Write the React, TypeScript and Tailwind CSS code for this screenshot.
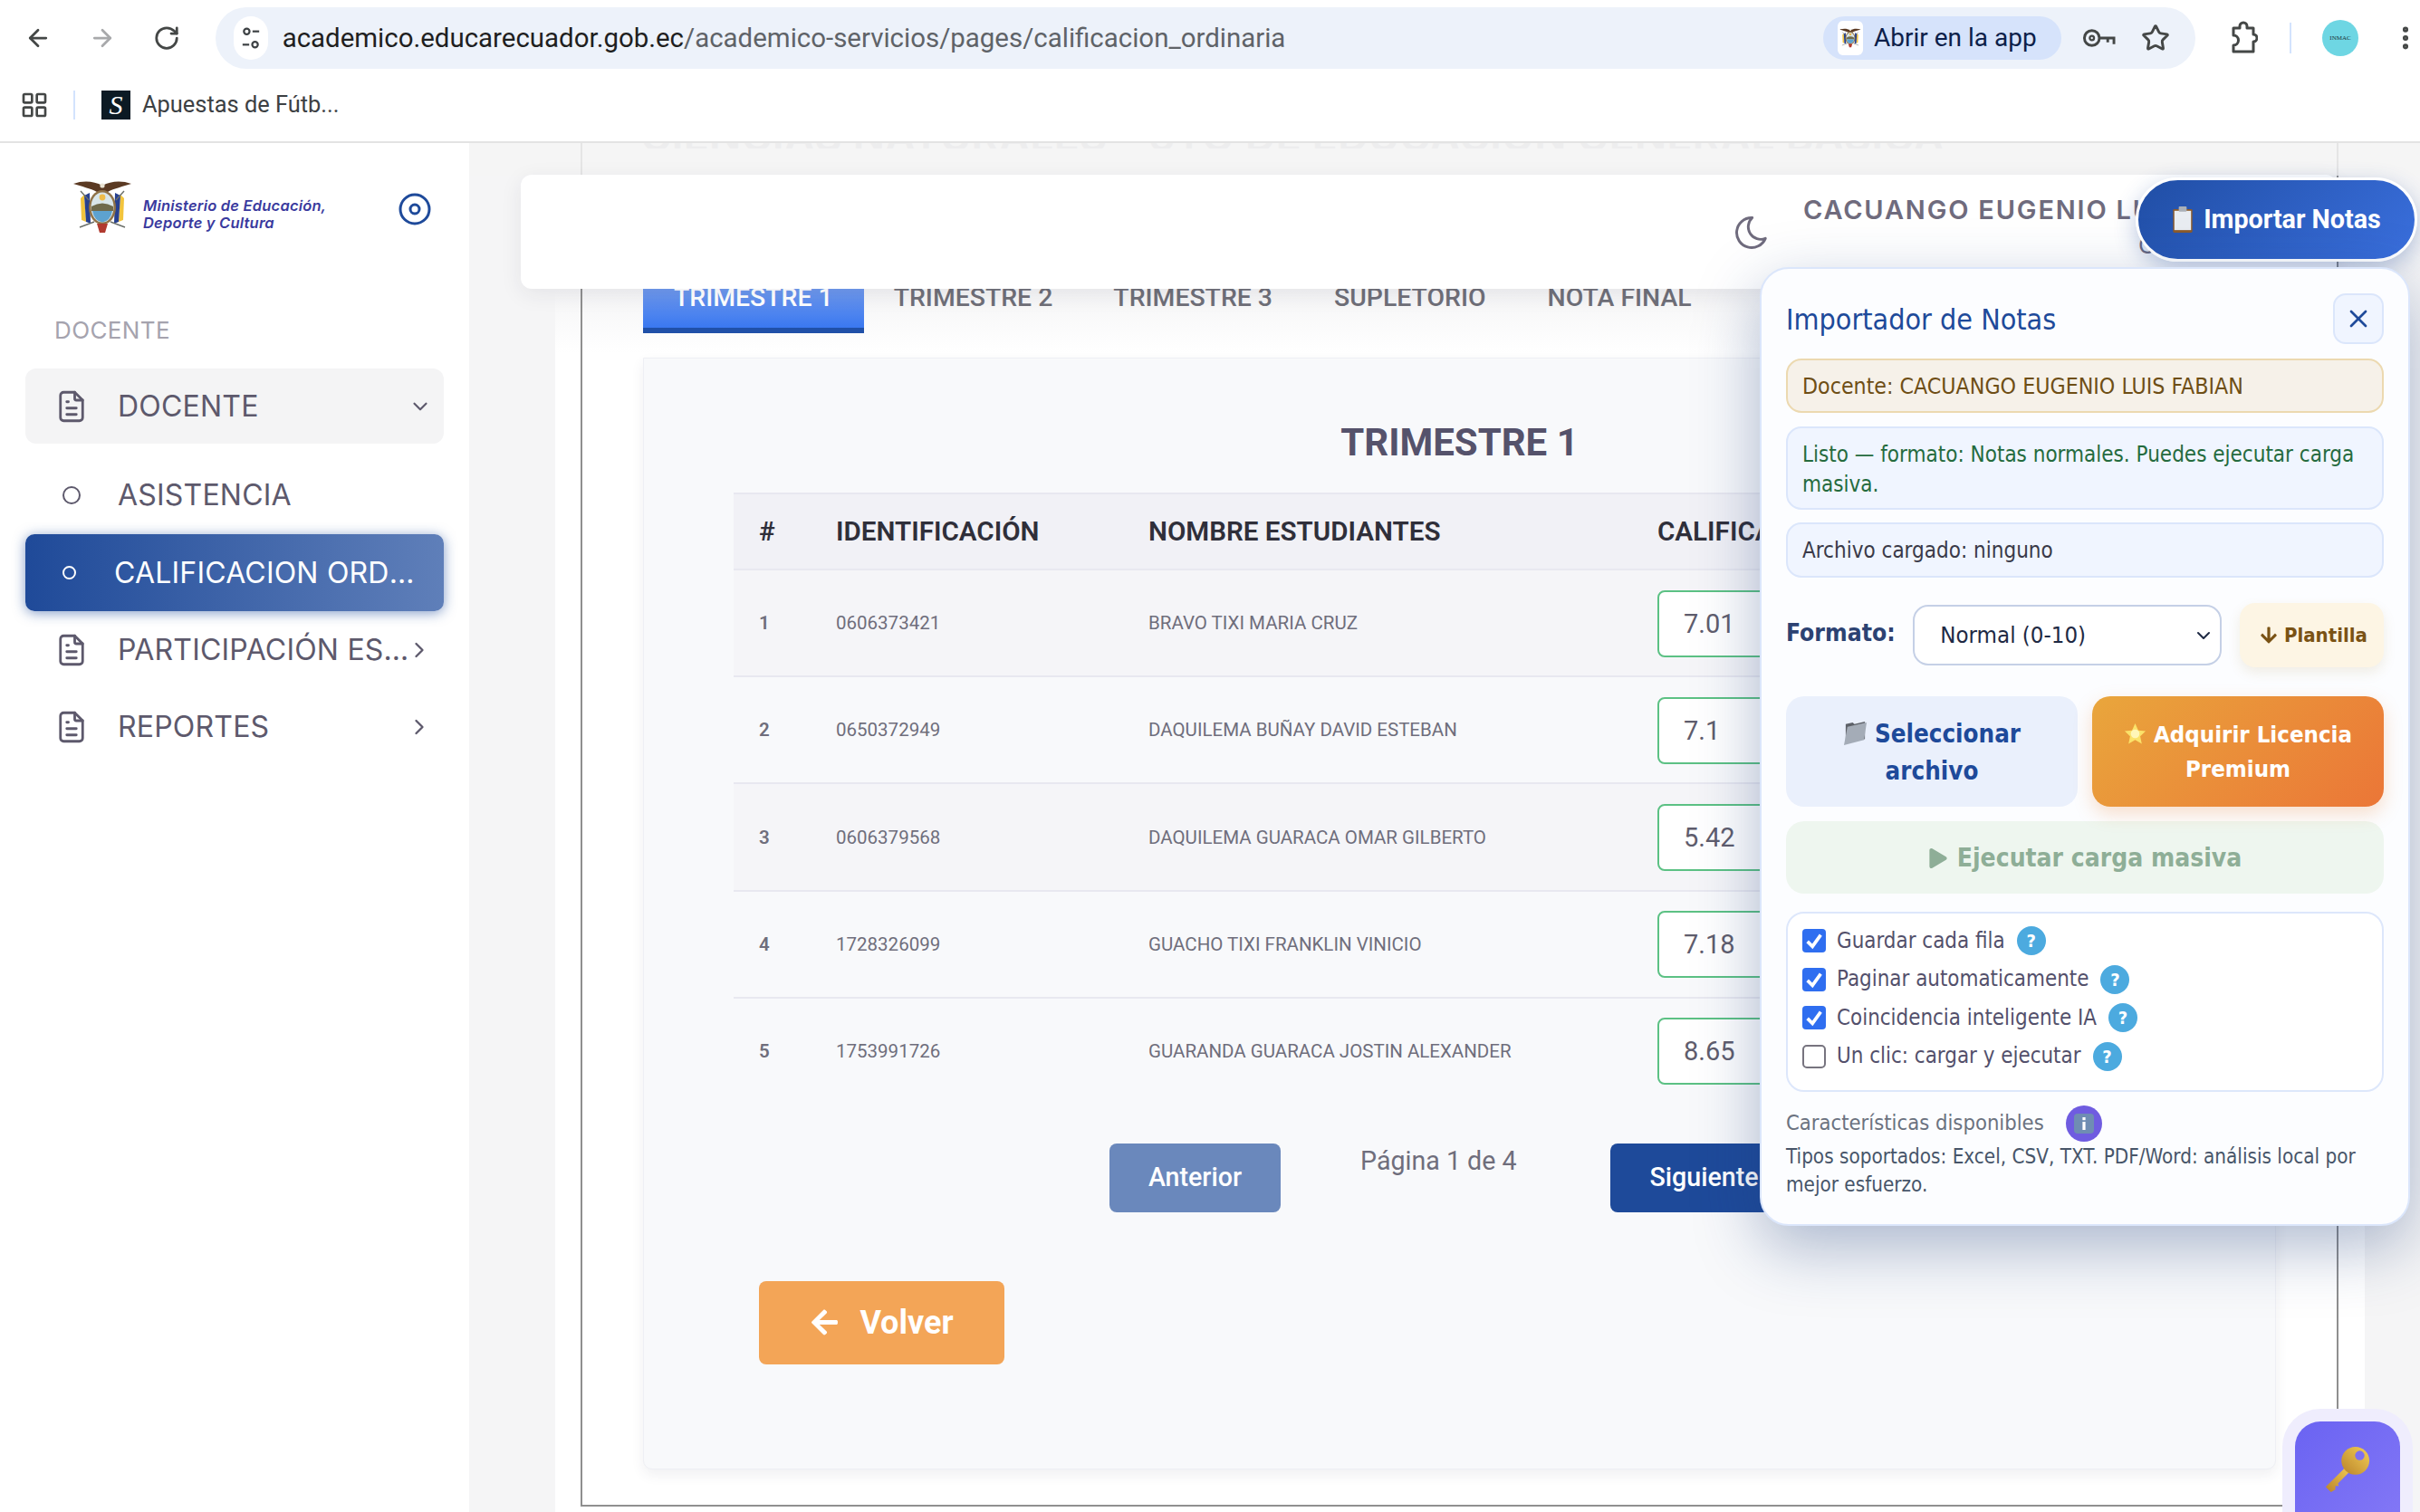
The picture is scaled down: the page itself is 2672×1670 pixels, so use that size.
import React from "react";
import { ArrowLeft, ArrowRight, RotateCw, Star, EllipsisVertical, LayoutGrid } from "lucide-react";
import { TbFileText, TbChevronDown, TbChevronRight, TbMoon, TbX } from "react-icons/tb";
import { FaArrowLeft, FaArrowDown, FaPlay } from "react-icons/fa";

function Emblem({ className }: { className?: string }) {
  return (
    <svg viewBox="0 0 66 64" className={className}>
      <path d="M1 6 C12 2 24 3 33 8 C42 3 54 2 65 6 C56 9 46 11 39 15 L27 15 C20 11 10 9 1 6Z" fill="#5b3a23" />
      <circle cx="33" cy="8" r="2.6" fill="#e9e2d2" />
      <path d="M9 22 L13 18 L15 48 L10 46Z" fill="#f2c43d" />
      <path d="M13 19 L19 16 L20 50 L15 48Z" fill="#27408f" />
      <path d="M57 22 L53 18 L51 48 L56 46Z" fill="#f2c43d" />
      <path d="M53 19 L47 16 L46 50 L51 48Z" fill="#27408f" />
      <ellipse cx="33" cy="32" rx="15" ry="19" fill="#8f7247" />
      <ellipse cx="33" cy="32" rx="12.5" ry="16.5" fill="#d9e6ea" />
      <path d="M21 31 Q33 24 45 31 L45 36 L21 36Z" fill="#6f6a4c" />
      <path d="M22 36 L44 36 Q42 47 33 48.5 Q24 47 22 36Z" fill="#5da2cf" />
      <circle cx="33" cy="21" r="3.4" fill="#eebc4a" />
      <path d="M27 50 L39 50 L36 60 L30 60Z" fill="#b13a2f" />
      <path d="M8 54 L24 48 M58 54 L42 48 M9 14 L18 24 M57 14 L48 24" stroke="#6b6f6a" strokeWidth="1.4" />
    </svg>
  );
}

function Target() {
  return (
    <svg viewBox="0 0 36 36" className="w-[36px] h-[36px] text-[#1e4a9a]" fill="none" stroke="currentColor">
      <circle cx="18" cy="18" r="16" strokeWidth="3" />
      <circle cx="18" cy="18" r="5" strokeWidth="3" />
    </svg>
  );
}

function Tune() {
  return (
    <svg viewBox="0 0 24 32" className="w-[22px] h-[30px] text-[#3c4043]" fill="none" stroke="currentColor" strokeWidth="2.4">
      <circle cx="7" cy="8" r="3.4" />
      <path d="M14 8 H22" />
      <circle cx="17" cy="24" r="3.4" />
      <path d="M2 24 H10" />
    </svg>
  );
}

function ChromeKey() {
  return (
    <svg viewBox="0 0 38 24" className="w-[37px] h-[24px] text-[#444746]" fill="none" stroke="currentColor" strokeWidth="3">
      <circle cx="11" cy="12" r="8.5" />
      <circle cx="11" cy="12" r="2.4" strokeWidth="2.4" />
      <path d="M20 12 H36 V19 M29 12 V17" />
    </svg>
  );
}

function Extension() {
  return (
    <svg viewBox="0 0 30 38" className="ml-[39px] h-[38px] w-[30px]" fill="none" stroke="currentColor" strokeWidth="3" strokeLinejoin="round">
      <path d="M3 8 H10 V6 a4 4 0 0 1 8 0 V8 H25 V15 a4 4 0 0 1 0 8 V34 H3 V27 a5 5 0 0 0 0-11 Z" />
    </svg>
  );
}

function Clipboard() {
  return (
    <svg viewBox="0 0 24 32" className="w-[24px] h-[31px]">
      <rect x="1" y="4" width="22" height="27" rx="1.5" fill="#8b5a2b" />
      <rect x="2.5" y="6" width="19" height="22" fill="#e9edf2" />
      <rect x="7.5" y="1" width="9" height="6" rx="1" fill="#aab0b8" />
    </svg>
  );
}

function Folder() {
  return (
    <svg viewBox="0 0 28 30" className="w-[27px] h-[29px]">
      <path d="M3 5 L11 3 L13 5 L25 2 L25 22 L3 27Z" fill="#5d6168" />
      <path d="M5 8 L27 3 L24 23 L1 29Z" fill="#a4acb7" />
    </svg>
  );
}

function Sparkle() {
  return (
    <svg viewBox="0 0 26 26" className="w-[25px] h-[25px]">
      <path d="M13 1 L16.6 9 L25 10 L18.8 15.8 L20.6 24.5 L13 20 L5.4 24.5 L7.2 15.8 L1 10 L9.4 9Z" fill="#fbe26a" />
      <circle cx="13" cy="13" r="5" fill="#fff6b8" />
    </svg>
  );
}

function InfoEmoji() {
  return (
    <svg viewBox="0 0 24 24" className="w-[24px] h-[24px]">
      <rect x="1" y="1" width="22" height="22" rx="4" fill="#6f8db3" />
      <rect x="10.4" y="10" width="3.2" height="9" fill="#fff" />
      <rect x="10.4" y="5" width="3.2" height="3.2" fill="#fff" />
    </svg>
  );
}

function GoldKey() {
  return (
    <svg viewBox="0 0 56 56" className="w-[54px] h-[54px]">
      <defs>
        <linearGradient id="gk" x1="0" y1="1" x2="1" y2="0">
          <stop offset="0" stopColor="#b9822a" />
          <stop offset="1" stopColor="#f4cf55" />
        </linearGradient>
      </defs>
      <path d="M3 48 L27 24 L32 29 L17 44 L18 47 L14 47 L14 51 L9 54Z" fill="url(#gk)" />
      <circle cx="37" cy="18" r="16" fill="url(#gk)" />
      <circle cx="42" cy="12" r="5.4" fill="#7d6ff3" />
    </svg>
  );
}

function Help() {
  return (
    <span className="flex h-[32px] w-[32px] shrink-0 items-center justify-center rounded-full bg-[#4caadf] text-[20px] font-bold text-white">?</span>
  );
}

function Check({ on, label }: { on: boolean; label: string }) {
  return (
    <div className="flex h-[42.5px] items-center">
      {on ? (
        <span className="flex h-[26px] w-[26px] items-center justify-center rounded-[4px] bg-[#2f6ef0]">
          <svg viewBox="0 0 24 24" className="h-[22px] w-[22px]" fill="none" stroke="#fff" strokeWidth="4">
            <path d="M4 13 L10 19 L20 5" />
          </svg>
        </span>
      ) : (
        <span className="h-[26px] w-[26px] rounded-[5px] border-2 border-[#77747f] bg-white" />
      )}
      <span className="ml-[12px] mr-[13px] pt-[1px] text-[23.9px] text-[#53506b]">{label}</span>
      <Help />
    </div>
  );
}

function NavItem({ label, open }: { label: string; open?: boolean }) {
  return (
    <div className={`flex h-[83px] items-center rounded-[12px] pl-[32px] pr-[13px] text-[#5d596c] ${open ? "bg-[#f4f4f5]" : ""}`}>
      <TbFileText className="h-[42px] w-[42px] shrink-0 -ml-[2px]" strokeWidth={1.6} />
      <span className="ml-[30px] flex-1 truncate text-[32px] tracking-[0.2px]">{label}</span>
      {open ? <TbChevronDown className="h-[26px] w-[26px]" /> : <TbChevronRight className="-ml-[12px] h-[28px] w-[28px] shrink-0" />}
    </div>
  );
}

const rows = [
  ["1", "0606373421", "BRAVO TIXI MARIA CRUZ", "7.01"],
  ["2", "0650372949", "DAQUILEMA BUÑAY DAVID ESTEBAN", "7.1"],
  ["3", "0606379568", "DAQUILEMA GUARACA OMAR GILBERTO", "5.42"],
  ["4", "1728326099", "GUACHO TIXI FRANKLIN VINICIO", "7.18"],
  ["5", "1753991726", "GUARANDA GUARACA JOSTIN ALEXANDER", "8.65"],
];

const panelFont = "font-['DejaVu_Sans_Condensed','Noto_Sans',sans-serif]";

export default function App() {
  return (
    <div className="h-[1670px] w-[2672px] overflow-hidden bg-white font-['Roboto',sans-serif]">
      {/* browser chrome */}
      <header className="h-[158px] border-b-2 border-[#e3e3e3] bg-white">
        <div className="flex h-[84px] items-start pt-[8px]">
          <div className="flex h-[68px] w-[238px] items-center pl-[27px] text-[#444746]">
            <ArrowLeft className="h-[30px] w-[30px]" strokeWidth={2.2} />
            <ArrowRight className="ml-[41px] h-[30px] w-[30px] text-[#a8a9ab]" strokeWidth={2.2} />
            <RotateCw className="ml-[41px] h-[30px] w-[30px]" strokeWidth={2.2} />
          </div>
          <div className="flex h-[68px] w-[2190px] items-center rounded-full bg-[#edf2fa] pl-[20px] pr-[28px]">
            <span className="flex h-[48px] w-[38px] items-center justify-center rounded-full bg-white"><Tune /></span>
            <span className="ml-[16px] flex-1 text-[29.45px] text-[#5f6368]">
              <span className="text-[#1f1f1f]">academico.educarecuador.gob.ec</span>/academico-servicios/pages/calificacion_ordinaria
            </span>
            <span className="flex h-[48px] w-[263px] items-center rounded-full bg-[#d6e3fb] pl-[16px]">
              <span className="flex h-[38px] w-[28px] items-center justify-center rounded-[6px] bg-white"><Emblem className="h-[26px] w-[24px]" /></span>
              <span className="ml-[12px] text-[28px] text-[#0d1f4a]">Abrir en la app</span>
            </span>
            <span className="ml-[23px]"><ChromeKey /></span>
            <Star className="ml-[28px] h-[32px] w-[32px] text-[#444746]" strokeWidth={2.2} />
          </div>
          <div className="flex h-[68px] items-center text-[#444746]">
            <Extension />
            <span className="ml-[35px] h-[34px] w-[2px] bg-[#d3e3fd]" />
            <span className="ml-[34px] flex h-[40px] w-[40px] items-center justify-center rounded-full bg-[#6ed6e3] font-['Liberation_Serif',serif] text-[7px] text-[#20333a]">INMAC</span>
            <EllipsisVertical className="ml-[36px] h-[32px] w-[32px]" strokeWidth={2.6} />
          </div>
        </div>
        <div className="flex h-[48px] items-center pl-[22px] pt-[15px]">
          <LayoutGrid className="h-[32px] w-[32px] text-[#444746]" strokeWidth={2} />
          <span className="ml-[27px] h-[32px] w-[2px] bg-[#d3e3fd]" />
          <span className="ml-[29px] flex h-[32px] w-[32px] items-center justify-center bg-[#0c1a24] font-['Liberation_Serif',serif] text-[30px] italic text-white">S</span>
          <span className="ml-[13px] text-[25.4px] text-[#3c4043]">Apuestas de Fútb...</span>
        </div>
      </header>

      <div className="flex h-[1512px]">
        {/* sidebar */}
        <aside className="w-[518px] shrink-0 bg-white font-['Inter',sans-serif]">
          <div className="flex h-[191px] items-start pl-[80px] pt-[38px]">
            <Emblem className="h-[66px] w-[66px] shrink-0" />
            <div className="ml-[12px] mt-[22px] w-[232px] text-[16.5px] font-semibold italic leading-[19px] tracking-[0.2px] text-[#3a3a9e]">
              Ministerio de Educación,<br />Deporte y Cultura
            </div>
            <span className="ml-[50px] mt-[17px]"><Target /></span>
          </div>
          <div className="pl-[60px] text-[26px] leading-[32px] tracking-[0.4px] text-[#a5a3ae]">DOCENTE</div>
          <div className="mt-[26px] px-[28px] flex flex-col">
            <NavItem label="DOCENTE" open />
            <div className="mt-[15px] flex h-[83px] items-center pl-[41px] text-[#5d596c]">
              <span className="h-[20px] w-[20px] rounded-full border-2 border-[#5d596c]" />
              <span className="ml-[41px] text-[32px] tracking-[0.2px]">ASISTENCIA</span>
            </div>
            <div className="mt-[2px] flex h-[85px] items-center rounded-[10px] bg-[linear-gradient(90deg,#1f4a99,#5f7fb9)] pl-[41px] pr-[29px] text-white shadow-[0_2px_14px_rgba(30,74,154,0.55)]">
              <span className="h-[15px] w-[15px] shrink-0 rounded-full border-2 border-white" />
              <span className="ml-[42px] truncate text-[32px] tracking-[0.2px]">CALIFICACION ORDINARIA</span>
            </div>
            <div className="mt-[1px]"><NavItem label="PARTICIPACIÓN ESTUDIANTIL" /></div>
            <div className="mt-[2px]"><NavItem label="REPORTES" /></div>
          </div>
        </aside>

        {/* main */}
        <main className="relative flex-1 overflow-hidden bg-[#f5f5f6] pl-[95px] pr-[61px]">
          <div className="h-full bg-[linear-gradient(180deg,#f3f3f4_0,#f5f5f6_162px,#ffffff_232px)] pl-[28px] pr-[29px]">
            <div className="h-[1506px] border-b-2 border-l-2 border-r-2 border-[#8f8f8f] px-[67px]">
              <div className="h-[6px] overflow-hidden">
                <div className="-ml-[3px] -mt-[31px] whitespace-nowrap text-left font-['Inter',sans-serif] text-[46.8px] font-semibold leading-[46px] text-[#c4c4c8]">CIENCIAS NATURALES - 6TO DE EDUCACIÓN GENERAL BÁSICA</div>
              </div>
              <nav className="mt-[136px] flex h-[68px] text-[28.4px] font-medium text-[#6f6f78]">
                <span className="flex h-[68px] items-center border-b-[6px] border-[#2050a8] bg-[linear-gradient(180deg,#86a7ec,#3a78f0)] px-[34px] pb-[4px] text-[#ffffff]">TRIMESTRE 1</span>
                <span className="flex h-[68px] items-center px-[33px] pb-[10px]">TRIMESTRE 2</span>
                <span className="flex h-[68px] items-center px-[34px] pb-[10px]">TRIMESTRE 3</span>
                <span className="flex h-[68px] items-center px-[34px] pb-[10px]">SUPLETORIO</span>
                <span className="flex h-[68px] items-center px-[34px] pb-[10px]">NOTA FINAL</span>
              </nav>
              <section className="mt-[27px] rounded-b-[10px] border border-[#eeeff4] bg-[#f8f9fb] shadow-[0_6px_14px_rgba(60,60,90,0.08)]">
                <h2 className="pt-[69px] pb-[31px] text-center text-[42px] font-bold leading-[48px] text-[#55526b]">TRIMESTRE 1</h2>
                <div className="ml-[99px] mr-[95px]">
                  <div className="flex h-[86px] items-center border-y-2 border-[#e8e8f0] bg-[#f1f1f6] text-[29.6px] font-semibold text-[#2f2f3a]">
                    <span className="w-[113px] pl-[28px]">#</span>
                    <span className="w-[345px]">IDENTIFICACIÓN</span>
                    <span className="w-[562px]">NOMBRE ESTUDIANTES</span>
                    <span>CALIFICACIÓN</span>
                  </div>
                  {rows.map((r, i) => (
                    <div key={r[0]} className={`flex h-[118.2px] items-center border-b-2 pt-[1px] text-[20.5px] text-[#6f6e7c] ${i === 4 ? "border-transparent" : "border-[#e8e8f0]"} ${i % 2 === 0 && i !== 4 ? "bg-[#f5f5f8]" : "bg-[#f8f9fb]"}`}>
                      <span className="w-[113px] pl-[28px] font-semibold">{r[0]}</span>
                      <span className="w-[345px]">{r[1]}</span>
                      <span className="w-[562px]">{r[2]}</span>
                      <input readOnly value={r[3]} className="h-[74px] w-[290px] rounded-[8px] border-2 border-[#5cc184] bg-white pl-[27px] text-[29px] text-[#5f5d6d] outline-none" />
                    </div>
                  ))}
                </div>
                <div className="mt-[42px] ml-[514px] flex items-start">
                  <button className="h-[76px] w-[189px] rounded-[8px] bg-[#6a88bc] text-[28.6px] font-medium text-white">Anterior</button>
                  <span className="ml-[88px] mr-[103px] text-[28.6px] leading-[38px] text-[#6f6e7c]">Página 1 de 4</span>
                  <button className="h-[76px] w-[221px] rounded-[8px] bg-[#1e4a9a] pl-[44px] text-left text-[28.6px] font-medium text-white">Siguiente</button>
                </div>
                <button className="ml-[127px] mt-[76px] mb-[115px] flex h-[92px] w-[271px] items-center justify-center rounded-[8px] bg-[#f3a557] text-[36px] font-bold text-white">
                  <FaArrowLeft className="mr-[22px] h-[33px] w-[33px]" />Volver
                </button>
              </section>
            </div>
          </div>

          {/* blurred band above the sticky bar */}
          <div className="absolute inset-x-0 top-0 h-[36px] bg-[#f4f4f5]/85" />

          {/* sticky header bar */}
          <div className="absolute left-[57px] top-[35px] flex h-[126px] w-[2005px] items-start overflow-hidden rounded-[12px] bg-white pl-[1337px] shadow-[0_6px_24px_rgba(40,40,60,0.08)]">
            <TbMoon className="mt-[42px] h-[44px] w-[44px] shrink-0 text-[#6f6b7d]" strokeWidth={1.6} />
            <div className="ml-[35px] font-['Inter',sans-serif] text-[#6f6b7d]">
              <div className="mt-[21px] whitespace-nowrap text-[29px] font-semibold leading-[36px] tracking-[1.8px]">CACUANGO EUGENIO LUIS FABIAN</div>
              <div className="ml-[370px] mt-[7px] text-[26px] leading-[28px]">C</div>
            </div>
          </div>

          {/* importer toggle */}
          <button className="absolute left-[1840px] top-[38px] flex h-[93px] w-[311px] items-center justify-center rounded-full border-[3px] border-white bg-[linear-gradient(135deg,#204ea5,#3a6fdd)] text-[28.7px] font-bold text-white shadow-[0_8px_24px_rgba(30,74,154,0.3)]">
            <Clipboard /><span className="ml-[11px]">Importar Notas</span>
          </button>

          {/* importer panel */}
          <div className={`absolute left-[1425px] top-[137px] h-[1059px] w-[718px] rounded-[32px] border-2 border-[#dbe6fb] bg-[#fcfdff] px-[27px] pt-[27px] shadow-[0_24px_70px_rgba(30,60,120,0.35)] ${panelFont}`}>
            <div className="flex h-[56px] items-center justify-between">
              <h3 className="pt-[2px] text-[32px] text-[#1e4a9a]">Importador de Notas</h3>
              <button className="flex h-[56px] w-[56px] items-center justify-center rounded-[14px] border-2 border-[#dbe6fb] bg-[#f0f5ff] text-[#1e4a9a]"><TbX className="h-[32px] w-[32px]" /></button>
            </div>
            <div className="mt-[16px] flex h-[60px] items-center rounded-[17px] border-2 border-[#ecd9b0] bg-[#f6f1e9] pl-[16px] pt-[1px] text-[24.7px] text-[#6e4e15]">Docente: CACUANGO EUGENIO LUIS FABIAN</div>
            <div className="mt-[15px] h-[92px] rounded-[17px] border-2 border-[#dbe6fb] bg-[#f0f5ff] px-[16px] py-[13px] text-[24px] leading-[32.5px] text-[#256b3e]">Listo — formato: Notas normales. Puedes ejecutar carga masiva.</div>
            <div className="mt-[14px] flex h-[61px] items-center rounded-[17px] border-2 border-[#dbe6fb] bg-[#f0f5ff] pl-[16px] text-[24px] text-[#3a3a48]">Archivo cargado: ninguno</div>
            <div className="mt-[28px] flex h-[71px] items-start">
              <span className="mt-[14px] w-[141px] text-[26.3px] font-bold text-[#2c4272]">Formato:</span>
              <div className="mt-[2px] flex h-[67px] w-[342px] items-center justify-between rounded-[17px] border-2 border-[#c5d0e6] bg-white pl-[28px] pr-[6px] text-[25.6px] text-[#1f2a44]">
                Normal (0-10)<TbChevronDown className="h-[24px] w-[24px]" />
              </div>
              <button className="ml-[20px] flex h-[71px] w-[160px] items-center justify-center rounded-[17px] bg-[#fdf5e4] pl-[5px] text-[22px] font-bold text-[#7a5214] shadow-[0_6px_14px_rgba(160,120,40,0.12)]">
                <FaArrowDown className="mr-[8px] h-[21px] w-[18px]" />Plantilla
              </button>
            </div>
            <div className="mt-[32px] flex gap-[16px]">
              <button className="flex h-[122px] w-[322px] items-center justify-center rounded-[20px] bg-[#eaf0fc] px-[30px] pt-[2px] text-center text-[27.5px] font-bold leading-[41px] text-[#1e4a9a]">
                <span><span className="mr-[8px] inline-block align-[-4px]"><Folder /></span>Seleccionar archivo</span>
              </button>
              <button className="flex h-[122px] w-[322px] items-center justify-center rounded-[20px] bg-[linear-gradient(135deg,#e9a63c,#eb7637)] px-[24px] text-center text-[25.6px] font-bold leading-[38px] text-white shadow-[0_8px_20px_rgba(235,130,50,0.25)]">
                <span><span className="mr-[8px] inline-block align-[-3px]"><Sparkle /></span>Adquirir Licencia Premium</span>
              </button>
            </div>
            <button className="mt-[16px] flex h-[80px] w-full items-center justify-center rounded-[20px] bg-[#eef6ef] pt-[2px] text-[28px] font-bold text-[#8eae97]">
              <FaPlay className="mr-[10px] h-[22px] w-[22px]" />Ejecutar carga masiva
            </button>
            <div className="mt-[20px] h-[199px] rounded-[20px] border-2 border-[#dde7fb] bg-white pl-[16px] pt-[9px]">
              <Check on label="Guardar cada fila" />
              <Check on label="Paginar automaticamente" />
              <Check on label="Coincidencia inteligente IA" />
              <Check on={false} label="Un clic: cargar y ejecutar" />
            </div>
            <div className="mt-[15px] flex h-[40px] items-center text-[23.6px] text-[#6b7280]">
              Características disponibles
              <span className="ml-[24px] flex h-[40px] w-[40px] items-center justify-center rounded-full bg-[#6f5ce0]"><InfoEmoji /></span>
            </div>
            <p className="mt-[1px] text-[22.3px] leading-[31px] text-[#475569]">Tipos soportados: Excel, CSV, TXT. PDF/Word: análisis local por mejor esfuerzo.</p>
          </div>

          {/* licence key */}
          <button className="absolute left-[2016px] top-[1412px] flex h-[130px] w-[116px] items-start justify-center rounded-[28px] bg-[linear-gradient(135deg,#6a63f2,#8579f6)] pt-[26px] shadow-[0_0_0_14px_#efedfd]">
            <GoldKey />
          </button>
        </main>
      </div>
    </div>
  );
}
